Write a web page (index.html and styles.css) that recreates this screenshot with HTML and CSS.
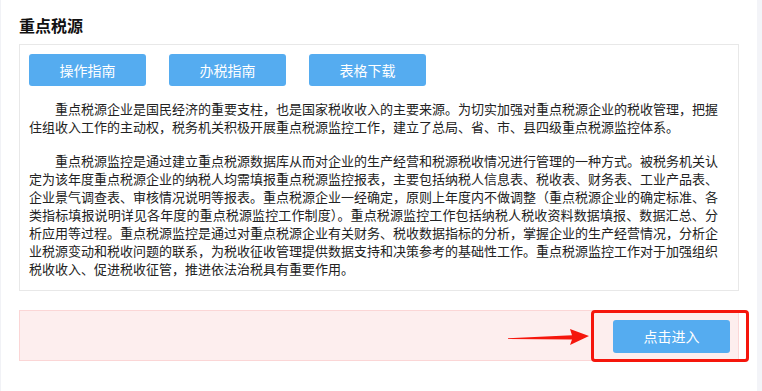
FILE: index.html
```html
<!DOCTYPE html>
<html lang="zh-CN">
<head>
    <meta charset="UTF-8">
    <meta name="viewport" content="width=device-width, initial-scale=1.0">
    <title>重点税源</title>
    <link rel="stylesheet" href="styles.css">
</head>
<body>
    <div class="page">
        <div class="main">
            <h2 class="title">重点税源</h2>

            <div class="intro-box">
                <div class="btn-row">
                    <a class="btn" href="#">操作指南</a>
                    <a class="btn" href="#">办税指南</a>
                    <a class="btn" href="#">表格下载</a>
                </div>
                <p>重点税源企业是国民经济的重要支柱，也是国家税收收入的主要来源。为切实加强对重点税源企业的税收管理，把握住组收入工作的主动权，税务机关积极开展重点税源监控工作，建立了总局、省、市、县四级重点税源监控体系。</p>
                <p>重点税源监控是通过建立重点税源数据库从而对企业的生产经营和税源税收情况进行管理的一种方式。被税务机关认定为该年度重点税源企业的纳税人均需填报重点税源监控报表，主要包括纳税人信息表、税收表、财务表、工业产品表、企业景气调查表、审核情况说明等报表。重点税源企业一经确定，原则上年度内不做调整（重点税源企业的确定标准、各类指标填报说明详见各年度的重点税源监控工作制度）。重点税源监控工作包括纳税人税收资料数据填报、数据汇总、分析应用等过程。重点税源监控是通过对重点税源企业有关财务、税收数据指标的分析，掌握企业的生产经营情况，分析企业税源变动和税收问题的联系，为税收征收管理提供数据支持和决策参考的基础性工作。重点税源监控工作对于加强组织税收收入、促进税收征管，推进依法治税具有重要作用。</p>
            </div>

            <div class="enter-bar">
                <svg class="arrow" width="85" height="22" viewBox="0 0 85 22">
                    <polygon points="2,12.3 66,9.2 64,3 83,10 64,19 66,13.6 2,12.9" fill="#f5160c"/>
                </svg>
                <a class="btn btn-enter" href="#">点击进入</a>
                <div class="highlight"></div>
            </div>
        </div>
        <div class="side"></div>
    </div>
</body>
</html>
```

FILE: styles.css
```css
body {
    margin: 0;
    font-family: "Noto Sans CJK SC", "Microsoft YaHei", sans-serif;
    color: #222;
    background: #fff;
}

.page {
    display: flex;
    min-height: 391px;
    border-left: 1px solid #f1f2f6;
}

.main {
    width: 720px;
    padding: 13px 18px 0 18px;
    background: #fff;
}

.side {
    flex: 1;
    background: #f3f4f8;
}

.title {
    margin: 0 0 7px;
    font-size: 16px;
    line-height: 24px;
    font-weight: bold;
    color: #111;
}

.intro-box {
    border: 1px solid #e8e8e8;
    padding: 9px 20px 12px 9px;
}

.btn-row {
    display: flex;
    gap: 23px;
    margin-bottom: 14px;
}

.btn {
    display: block;
    width: 117px;
    height: 32px;
    line-height: 32px;
    text-align: center;
    background: #55acf0;
    border-radius: 3px;
    color: #fff;
    font-size: 14px;
    text-decoration: none;
}

.intro-box p {
    margin: 0;
    font-size: 13px;
    line-height: 18px;
    text-indent: 2em;
    text-align: justify;
}

.intro-box p + p {
    margin-top: 16px;
}

.enter-bar {
    position: relative;
    display: flex;
    justify-content: flex-end;
    margin-top: 19px;
    padding: 9px 8px 7px;
    background: #fdeeee;
    border: 1px solid #fbd6d6;
}

.btn-enter {
    height: 33px;
    line-height: 33px;
}

.highlight {
    position: absolute;
    left: 571px;
    top: -1px;
    width: 158px;
    height: 52px;
    box-sizing: border-box;
    border: 3px solid #f5160c;
    border-radius: 4px;
}

.arrow {
    position: absolute;
    left: 486px;
    top: 15px;
}
```
